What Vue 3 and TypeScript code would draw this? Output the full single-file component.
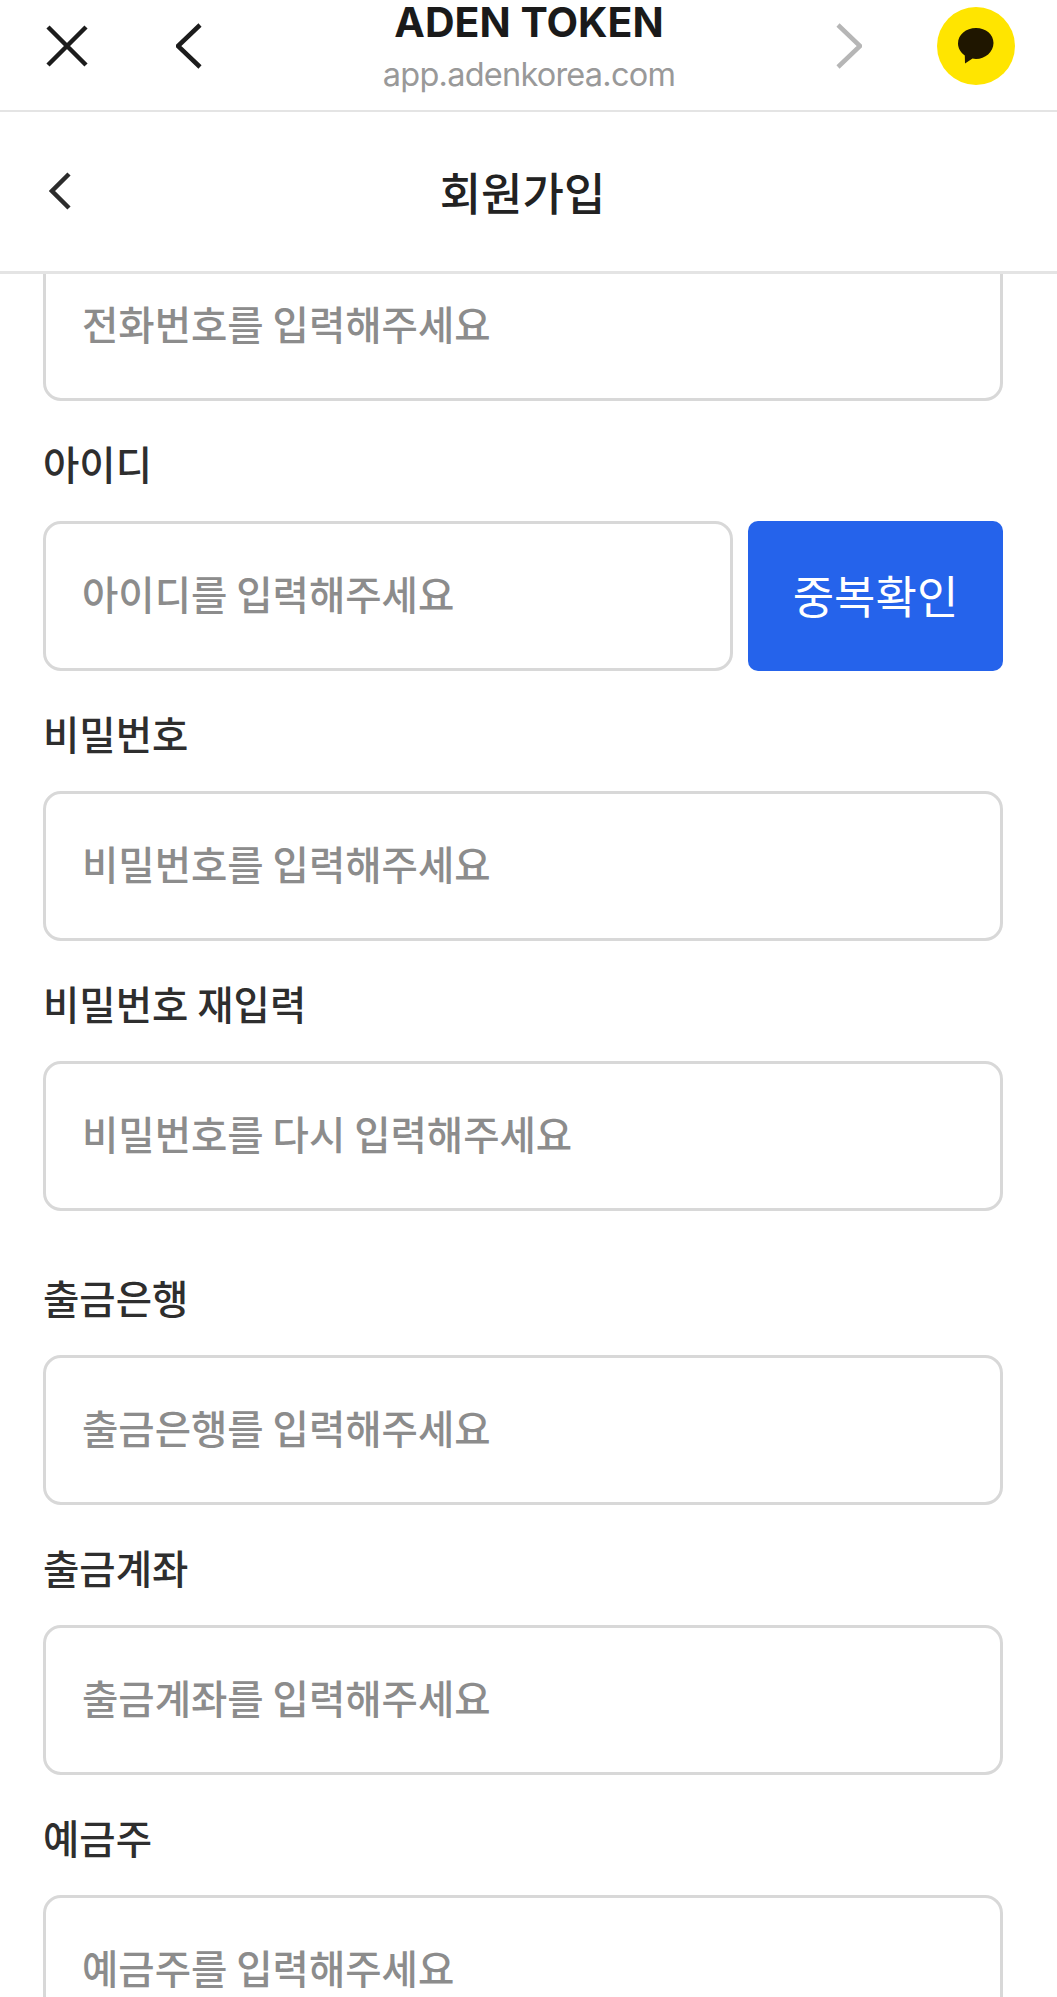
<template>
  <div class="page">
    <div class="browser-bar">
      <button class="bar-icon close-btn" type="button" aria-label="닫기">
        <svg width="42" height="42" viewBox="0 0 42 42">
          <path d="M2 2 L40 40 M40 2 L2 40" />
        </svg>
      </button>
      <button class="bar-icon back-btn" type="button" aria-label="뒤로">
        <svg width="26" height="46" viewBox="0 0 26 46">
          <path d="M24 2 L2 23 L24 44" />
        </svg>
      </button>
      <div class="bar-title">
        <div class="bar-name">ADEN TOKEN</div>
        <div class="bar-url">app.adenkorea.com</div>
      </div>
      <button class="bar-icon forward-btn" type="button" aria-label="앞으로">
        <svg width="26" height="46" viewBox="0 0 26 46">
          <path d="M2 2 L24 23 L2 44" />
        </svg>
      </button>
      <button class="kakao-btn" type="button" aria-label="카카오톡">
        <svg width="36" height="36" viewBox="0 0 36 36">
          <path d="M18 0 C28 0 35.500 6.500 35.500 15 C35.500 24 27 31 18 31 C16.500 31 15.500 30.800 14.500 30.500 L7 35.500 L6.800 27.500 C2.500 24.500 0 20 0 15.500 C0 6.500 8 0 18 0 Z" />
        </svg>
      </button>
    </div>

    <header class="page-header">
      <button class="header-back" type="button" aria-label="뒤로">
        <svg width="22" height="38" viewBox="0 0 22 38">
          <path d="M20 2 L3 19 L20 36" />
        </svg>
      </button>
      <h1 class="header-title">회원가입</h1>
    </header>

    <main class="form-scroll">
      <form class="form" @submit.prevent>
        <div v-for="field in fields" :key="field.placeholder" class="field" :class="{ spaced: field.spaced }">
          <label v-if="field.label" class="field-label">{{ field.label }}</label>
          <div class="field-row">
            <input class="field-input" type="text" :placeholder="field.placeholder" />
            <button v-if="field.check" class="check-btn" type="button">중복확인</button>
          </div>
        </div>
      </form>
    </main>
  </div>
</template>

<script setup lang="ts">
interface Field {
  label: string
  placeholder: string
  check?: boolean
  spaced?: boolean
}

const fields: Field[] = [
  { label: '', placeholder: '전화번호를 입력해주세요' },
  { label: '아이디', placeholder: '아이디를 입력해주세요', check: true },
  { label: '비밀번호', placeholder: '비밀번호를 입력해주세요' },
  { label: '비밀번호 재입력', placeholder: '비밀번호를 다시 입력해주세요' },
  { label: '출금은행', placeholder: '출금은행를 입력해주세요', spaced: true },
  { label: '출금계좌', placeholder: '출금계좌를 입력해주세요' },
  { label: '예금주', placeholder: '예금주를 입력해주세요' },
]
</script>

<style scoped>
.page {
  display: flex;
  flex-direction: column;
  height: 1997px;
  overflow: hidden;
  background: #fff;
  font-family: "Noto Sans CJK KR", "Noto Sans", sans-serif;
  color: #222;
}

button {
  padding: 0;
  border: 0;
  background: none;
  font-family: inherit;
}

.browser-bar {
  display: flex;
  align-items: center;
  flex-shrink: 0;
  height: 112px;
  padding: 0 42px 19px 46px;
  box-sizing: border-box;
  border-bottom: 2px solid #e4e4e4;
}

.bar-icon {
  display: flex;
  flex-shrink: 0;
}

.bar-icon svg path {
  fill: none;
  stroke: #1c1c1c;
  stroke-width: 4.500;
}

.back-btn {
  margin-left: 88px;
}

.forward-btn svg path {
  stroke: #b6b6b6;
}

.bar-title {
  flex: 1;
  align-self: flex-start;
  padding-top: 2px;
  padding-left: 20px;
  text-align: center;
}

.bar-name {
  font-family: "Inter", "Liberation Sans", sans-serif;
  font-size: 41px;
  font-weight: 700;
  line-height: 40px;
  color: #1a1a1a;
}

.bar-url {
  margin-top: 14px;
  font-family: "Inter", "Liberation Sans", sans-serif;
  font-size: 32.500px;
  letter-spacing: -0.770px;
  line-height: 38px;
  color: #999;
}

.kakao-btn {
  display: flex;
  align-items: center;
  justify-content: center;
  flex-shrink: 0;
  width: 78px;
  height: 78px;
  margin-left: 75px;
  border-radius: 50%;
  background: #ffe500;
}

.kakao-btn svg path {
  fill: #1f1600;
}

.page-header {
  position: relative;
  display: flex;
  align-items: center;
  justify-content: center;
  flex-shrink: 0;
  height: 162px;
  padding-right: 12px;
  box-sizing: border-box;
  border-bottom: 3px solid #e4e4e4;
}

.header-back {
  position: absolute;
  left: 49px;
  top: 60px;
  display: flex;
}

.header-back svg path {
  fill: none;
  stroke: #2c2c2c;
  stroke-width: 4.500;
}

.header-title {
  margin: 0;
  font-size: 45px;
  font-weight: 500;
  color: #222;
}

.form-scroll {
  flex: 1;
  overflow: hidden;
}

.form {
  display: flex;
  flex-direction: column;
  gap: 28px;
  margin-top: -23px;
  padding: 0 54px 0 43px;
}

.field.spaced {
  margin-top: 24px;
}

.field-label {
  display: block;
  height: 72px;
  margin-bottom: 20px;
  font-size: 39.500px;
  font-weight: 500;
  line-height: 68px;
  color: #2e2e2e;
}

.field-row {
  display: flex;
  gap: 15px;
}

.field-input {
  flex: 1;
  min-width: 0;
  height: 150px;
  padding: 0 36px 8px;
  box-sizing: border-box;
  border: 3px solid #d8d8d8;
  border-radius: 18px;
  outline: none;
  background: #fff;
  font-family: inherit;
  font-size: 39.500px;
  font-weight: 500;
  color: #222;
}

.field-input::placeholder {
  color: #8c8c8c;
  opacity: 1;
}

.check-btn {
  flex-shrink: 0;
  width: 255px;
  height: 150px;
  padding-bottom: 4px;
  box-sizing: border-box;
  border-radius: 10px;
  background: #2563eb;
  font-size: 45px;
  font-weight: 400;
  color: #fff;
}
</style>
